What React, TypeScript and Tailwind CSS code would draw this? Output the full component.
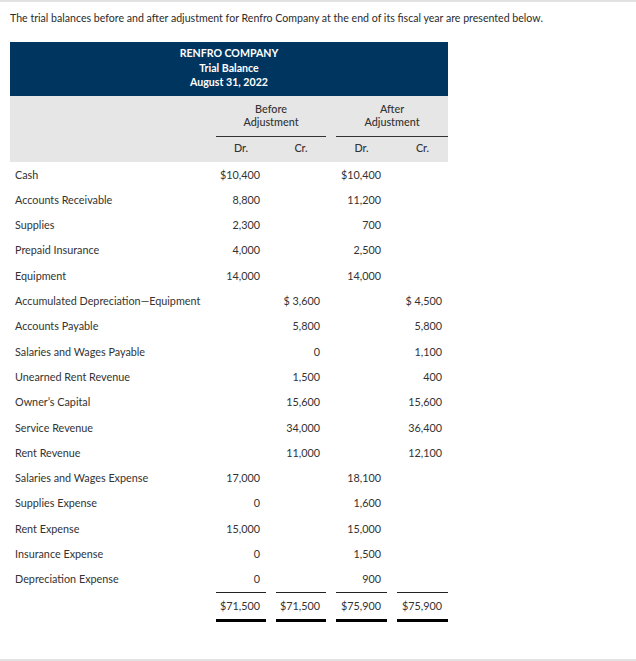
const rows: [string, string, string, string, string][] = [
  ["Cash", "$10,400", "", "$10,400", ""],
  ["Accounts Receivable", "8,800", "", "11,200", ""],
  ["Supplies", "2,300", "", "700", ""],
  ["Prepaid Insurance", "4,000", "", "2,500", ""],
  ["Equipment", "14,000", "", "14,000", ""],
  ["Accumulated Depreciation\u2014Equipment", "", "$ 3,600", "", "$ 4,500"],
  ["Accounts Payable", "", "5,800", "", "5,800"],
  ["Salaries and Wages Payable", "", "0", "", "1,100"],
  ["Unearned Rent Revenue", "", "1,500", "", "400"],
  ["Owner\u2019s Capital", "", "15,600", "", "15,600"],
  ["Service Revenue", "", "34,000", "", "36,400"],
  ["Rent Revenue", "", "11,000", "", "12,100"],
  ["Salaries and Wages Expense", "17,000", "", "18,100", ""],
  ["Supplies Expense", "0", "", "1,600", ""],
  ["Rent Expense", "15,000", "", "15,000", ""],
  ["Insurance Expense", "0", "", "1,500", ""],
  ["Depreciation Expense", "0", "", "900", ""],
]

const totals = ["$71,500", "$71,500", "$75,900", "$75,900"]

const grid = "grid grid-cols-[196px_60px_60px_61px_61px]"

export default function App() {
  return (
    <div
      className="w-[636px] h-[661px] bg-white border-y-2 border-[#e2e2e2] text-[#333] text-[10.8px]"
      style={{ fontFamily: "Lato, 'Open Sans', sans-serif" }}
    >
      <p className="px-[10px] pt-[9px] leading-[14px] text-[10.6px] text-[#2b2b2b]">
        The trial balances before and after adjustment for Renfro Company at the end of its fiscal year are presented below.
      </p>

      <div className="ml-[10px] mt-[17px] w-[438px]">
        {/* Title */}
        <div className="bg-[#00355f] h-[54px] pt-[4px] text-white font-bold text-center leading-[14.5px] text-[10.6px]">
          <div>RENFRO COMPANY</div>
          <div>Trial Balance</div>
          <div>August 31, 2022</div>
        </div>

        {/* Column headings */}
        <div className="bg-[#e6e6e6] h-[66px] font-medium text-[#333]">
          <div className={grid}>
            <div />
            <div className="col-span-2 pl-[10px]">
              <div className="border-b border-[#333] text-center leading-[13px] pt-[6px] pb-[8px]">
                Before<br />Adjustment
              </div>
            </div>
            <div className="col-span-2 pl-[10px]">
              <div className="border-b border-[#333] text-center leading-[13px] pt-[6px] pb-[8px]">
                After<br />Adjustment
              </div>
            </div>
          </div>
          <div className={grid + " h-[25px] pt-[4px] leading-[13px]"}>
            <div />
            {["Dr.", "Cr.", "Dr.", "Cr."].map((h, i) => (
              <div key={i} className="pl-[10px] text-center">
                {h}
              </div>
            ))}
          </div>
        </div>

        {/* Accounts */}
        {rows.map((r) => (
          <div key={r[0]} className={grid + " h-[25.3px] items-center"}>
            <div className="pl-[5px]">{r[0]}</div>
            {r.slice(1).map((v, i) => (
              <div key={i} className="pl-[10px] text-right pr-[6px] whitespace-pre">
                {v}
              </div>
            ))}
          </div>
        ))}

        {/* Totals */}
        <div className={grid}>
          <div />
          {totals.map((t, i) => (
            <div key={i} className="pl-[10px]">
              <div className="border-t border-[#222] border-b-[3px] border-b-black h-[30px] flex items-center justify-end pr-[6px]">
                {t}
              </div>
            </div>
          ))}
        </div>
      </div>
    </div>
  )
}
